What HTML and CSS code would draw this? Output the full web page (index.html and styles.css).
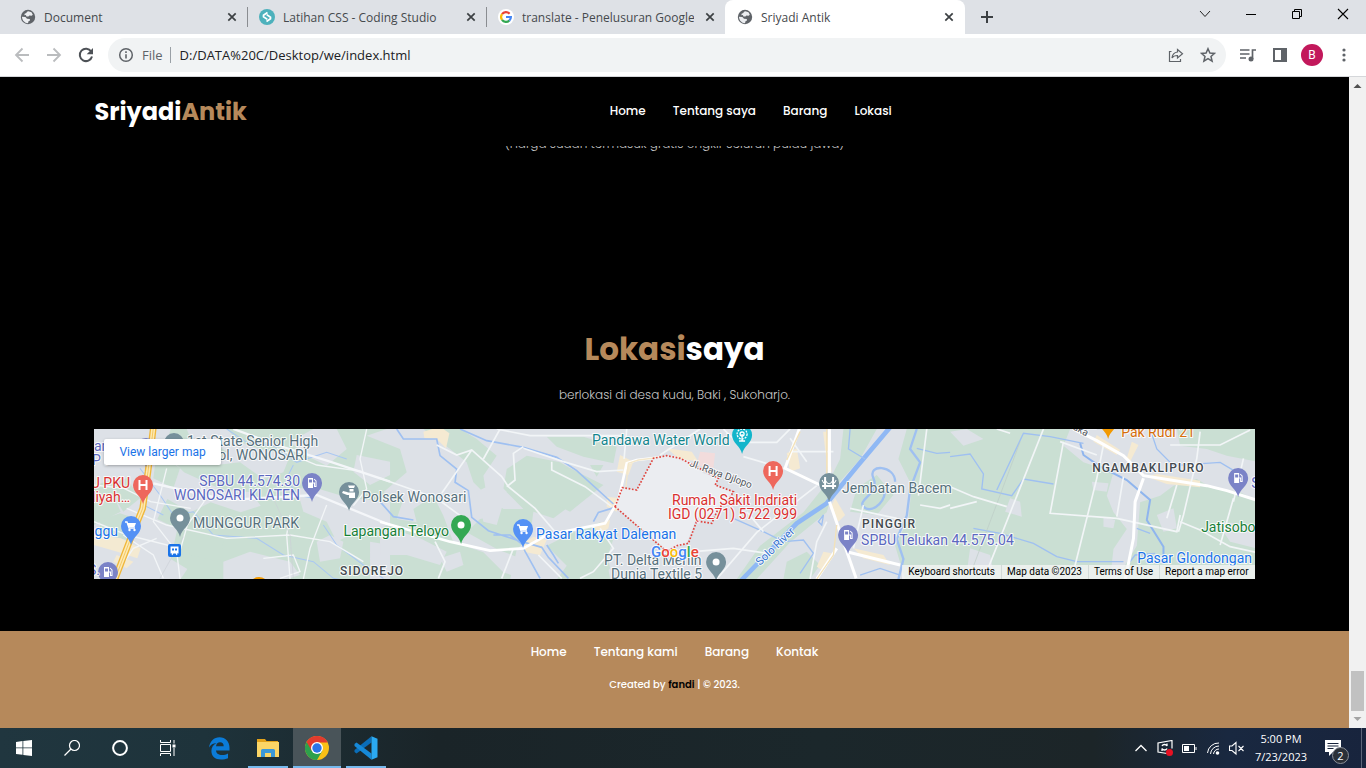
FILE: index.html
```html
<!DOCTYPE html>
<html lang="id">
<head>
<meta charset="utf-8">
<title>Sriyadi Antik</title>
<link rel="stylesheet" href="styles.css">
</head>
<body>
<svg class="defs" aria-hidden="true">
  <symbol id="globe" viewBox="0 0 16 16"><circle cx="8" cy="8" r="7.200" fill="#5f6368"/><path d="M8.400 2.200 11.500 3.300l1.300 2.500-1.200.9-2.200-.3-1 1.200-2-.1-.5-1.400-1.500.1.200-1.500 1.700-.6.700-1.400zM1.900 7.700l3.500.4 1.600 1.600 2.800.3.200 1.400-1.500.8-.5 2C4.500 14 2.300 11.500 1.900 7.700z" fill="#eceef1"/></symbol>
  <symbol id="x" viewBox="0 0 16 16"><path d="m4.300 4.300 7.400 7.400m0-7.400-7.400 7.400" stroke="#3c4043" stroke-width="1.700"/></symbol>
  <symbol id="pin" viewBox="-11 -11 22 31"><path d="M0 19C-1.500 11-10 8-10 0a10 10 0 1 1 20 0C10 8 1.500 11 0 19Z"/></symbol>
</svg>

<header class="tabs">
  <div class="tab"><svg class="i16"><use href="#globe"/></svg><span class="tab-title">Document</span><button class="tab-close" aria-label="Close Document"><svg class="i16"><use href="#x"/></svg></button></div>
  <div class="tab"><svg class="i16" viewBox="0 0 16 16"><circle cx="8" cy="8" r="8" fill="#4db1bc"/><path d="M8.500 3.500 4.500 6.300v1.400l3.800 2.700M7.700 5.600l3.800 2.700v1.400l-4 2.800" fill="none" stroke="#fff" stroke-width="1.700"/></svg><span class="tab-title">Latihan CSS - Coding Studio</span><button class="tab-close" aria-label="Close Latihan CSS"><svg class="i16"><use href="#x"/></svg></button></div>
  <div class="tab"><svg class="i16" viewBox="0 0 16 16"><circle cx="8" cy="8" r="8" fill="#fff"/><g fill="none" stroke-width="2.200"><path d="M4 5.200A4.900 4.900 0 0 1 11.600 4.700" stroke="#ea4335"/><path d="M4 10.800A4.900 4.900 0 0 1 4 5.200" stroke="#fbbc05"/><path d="M4 10.800a4.900 4.900 0 0 0 7.400.7" stroke="#34a853"/><path d="M8 8h4.900a4.900 4.900 0 0 1-1.600 3.600" stroke="#4285f4"/></g></svg><span class="tab-title">translate - Penelusuran Google</span><button class="tab-close" aria-label="Close translate"><svg class="i16"><use href="#x"/></svg></button></div>
  <div class="tab active"><svg class="i16"><use href="#globe"/></svg><span class="tab-title">Sriyadi Antik</span><button class="tab-close" aria-label="Close Sriyadi Antik"><svg class="i16"><use href="#x"/></svg></button></div>
  <button class="new-tab" aria-label="New tab"><svg class="i16" viewBox="0 0 16 16"><path d="M8 2v12M2 8h12" stroke="#3c4043" stroke-width="2"/></svg></button>
  <div class="win">
    <button aria-label="Search tabs"><svg class="i16" viewBox="0 0 16 16"><path d="m3 5 5 5.500L13 5" fill="none" stroke="#222"/></svg></button>
    <button aria-label="Minimize"><svg class="i16" viewBox="0 0 16 16"><path d="M3 8.500h10" stroke="#000"/></svg></button>
    <button aria-label="Restore"><svg class="i16" viewBox="0 0 16 16"><path d="M3.500 5.500h7v7h-7zM5.500 5.500v-2h7v7h-2" fill="none" stroke="#000"/></svg></button>
    <button aria-label="Close"><svg class="i16" viewBox="0 0 16 16"><path d="m3 3 10 10M13 3 3 13" stroke="#000" stroke-width="1.100"/></svg></button>
  </div>
</header>

<div class="toolbar">
  <button class="tool" aria-label="Back"><svg class="i16" viewBox="0 0 16 16"><path d="M15 8H2m6.500-6.500L2 8l6.500 6.500" fill="none" stroke="#babcbe" stroke-width="1.800"/></svg></button>
  <button class="tool" aria-label="Forward"><svg class="i16" viewBox="0 0 16 16"><path d="M1 8h13M7.500 1.500 14 8l-6.500 6.500" fill="none" stroke="#babcbe" stroke-width="1.800"/></svg></button>
  <button class="tool" aria-label="Reload"><svg class="i16" viewBox="0 0 16 16"><path d="M13.200 4.500A6.200 6.200 0 1 0 14 9.500" fill="none" stroke="#4d5156" stroke-width="2"/><path d="M15 1v6.300H8.700z" fill="#4d5156"/></svg></button>
  <div class="omnibox">
    <svg class="i16" viewBox="0 0 16 16"><circle cx="8" cy="8" r="6.300" fill="none" stroke="#5f6368" stroke-width="1.500"/><path d="M8 7.200v4.200M8 4.300v1.600" stroke="#5f6368" stroke-width="1.600"/></svg>
    <label class="scheme" for="url">File</label>
    <input id="url" type="text" value="D:/DATA%20C/Desktop/we/index.html">
    <button class="tool" aria-label="Share"><svg class="i16" viewBox="0 0 16 16"><path d="M3.500 4.500h-2v10h11v-2.500M9.500 2.500l5 4.300-5 4.200V8.500c-2.800 0-4.500.8-5.500 2.500.3-3.500 2.300-5.600 5.500-6z" fill="none" stroke="#5f6368" stroke-width="1.200"/></svg></button>
    <button class="tool" aria-label="Bookmark"><svg class="i16" viewBox="0 0 16 16"><path d="m8 1.700 1.900 4.300 4.600.4-3.500 3.100 1.100 4.700L8 11.700l-4.100 2.500L5 9.500 1.500 6.400 6.100 6z" fill="none" stroke="#5f6368" stroke-width="1.500"/></svg></button>
  </div>
  <button class="tool" aria-label="Media"><svg class="i16" viewBox="0 0 16 16"><path d="M0 3h9.500M0 7h9.500M0 11h6M12.500 12V3H16" fill="none" stroke="#5f6368" stroke-width="1.700"/><circle cx="11" cy="12" r="2.500" fill="#5f6368"/></svg></button>
  <button class="tool" aria-label="Side panel"><svg class="i16" viewBox="0 0 16 16"><path d="M1 1h14v14H1zM3 3v10h6V3z" fill="#5f6368" fill-rule="evenodd"/></svg></button>
  <button class="tool" aria-label="Profile"><span class="avatar">B</span></button>
  <button class="tool" aria-label="Menu"><svg class="i16" viewBox="0 0 16 16" fill="#5f6368"><circle cx="8" cy="3" r="1.600"/><circle cx="8" cy="8" r="1.600"/><circle cx="8" cy="13" r="1.600"/></svg></button>
</div>

<div class="viewport">
  <div class="page">
    <div class="navbar">
      <a class="logo" href="#">Sriyadi<span>Antik</span></a>
      <nav class="links"><a href="#home">Home</a><a href="#tentang">Tentang saya</a><a href="#barang">Barang</a><a href="#lokasi">Lokasi</a></nav>
      <div class="navbar-extra"></div>
    </div>
    <main>
      <div class="clip"><p>(Harga sudah termasuk gratis ongkir seluruh pulau jawa)</p></div>
      <section class="lokasi" id="lokasi">
        <h2><span>Lokasi</span>saya</h2>
        <p>berlokasi di desa kudu, Baki , Sukoharjo.</p>
        <div class="map">
          <svg class="map-art" viewBox="0 0 1160 150" preserveAspectRatio="xMidYMid slice">
            <rect width="1160" height="150" fill="#cadfd3"/>
            <g transform="translate(-4 -4) scale(.33333)">
              <g fill="#dde1e7">
                <path d="M12 12h230l-20 70 60 60 110 50 90 10 30 40-60 20-90-30-60 30-70-40-30 60 60 30-20 90 50 30-40 60-60 40H12V300l80-40-40-90-40 10z"/>
                <path d="M290 12h120l40 40 60 20 90 20-20 50-60 20-70-50-90 10-50-60zM620 190l60 0 100 30 120 10v70l-100 20-60 30-30-60-70-30zM600 50l70-38h70l30 60-60 50-60-30zM400 410l80-30 120 30 30 40-40 12H400zM680 350l40-20 40 20-10 50-60 10zM800 90l100 20v40l-60 30-50-40zM840 350l60 10v102h-60z"/>
              </g>
              <g fill="#cadfd3"><path d="M50 180l60-20 40 60-50 40zM30 285l60-20 60 20-40 60-80-20zM280 300l80-10 40 60-10 60-90-20zM200 80l70 50-20 60-60-30zM290 60l60-20 60 40-40 50-60-10z"/></g>
              <g fill="#f4ead2"><path d="M12 330l80 10 60 30-10 30-60-20-70-20zM80 390l50 20-20 20-40-20z"/></g>
              <g fill="none" stroke="#a9c7f3" stroke-width="3"><path d="M410 12l60 40 80 10 70 50 90-30 60 20M150 130l60 80 40 60 60-10 60 70 130 10 80 50 90 20 60 50 110 20M610 120l-20 40 30 50 50 10M700 300l40 60 80 60 60 40M220 270l-60-30-20-60"/></g>
              <g fill="none" stroke="#f2f5f7" stroke-width="4"><path d="M12 290l100 40 160 40 20-70 50-70-10-60M110 250l120 50 180 40 190-10 120 20 100 60M230 130l-40 160 70 90 10 82M200 340l-70 30-60 90M100 330l90 60 30 70M600 270l-10 60 10 132M710 240l-50 130-20 92M560 70l120 50 140 20M830 12l-20 90 20 90-40 50M12 180l90 10 80 40 120 20M520 400l90-10 20 50-60 20"/></g>
              <path d="M190 175l220 50 270-15L900 300M430 12l130 48 160 50 180 60" fill="none" stroke="#f4f6f9" stroke-width="7"/>
              <path d="M280 335l-70 125M550 220l50 110 10 130" fill="none" stroke="#cbd0d6" stroke-width="2"/>
              <path d="M190 8 174 140 158 250 122 340 72 470" fill="none" stroke="#f0b73a" stroke-width="20"/>
              <path d="M190 8 174 140 158 250 122 340 72 470" fill="none" stroke="#fdeab4" stroke-width="12"/>
              <path d="M190 8 174 140 158 250 122 340 72 470" fill="none" stroke="#f0b73a" stroke-width="2"/>
            </g>
            <g transform="translate(286 -4) scale(.33333)">
              <g fill="#dde1e7">
                <path d="M20 12h110l80 60 50 40 20 60 60 60 10 40-50 10-40 40 90 50 100 40-20 50-60-20-60-60-90-30-30-80-30-60-60 40 10 40-60-10 20-60-60-20 70-60-20-70-100-40z"/>
                <path d="M290 200l60-30 30 30-30 100-40-10zM240 12h480v90l-30 20 10 70-60-20-100-60-100-20-60 40-10 60 60 60-60 0-50-40-10-60 40-60-60-50z"/>
                <path d="M460 260l60 20 80-60 60-60 180 20v282H690l-10-60 20-60-40-50-80 30-80 40 60 60-30 42H390l20-90 40-40zM0 300l120 40 80 40-20 40-100-30-80 0zM180 400l60-20 10 40-50 20z"/>
                <path d="M650 12h200v200H680z"/>
              </g>
              <g fill="#cadfd3"><path d="M500 140l70-10 100 50-50 40-50 40-60-30zM500 35l110 0 100 30-10 50-90-20-80-30zM640 390l30-50 20 90-30 32h-30zM630 120l40 0-20 35z"/></g>
              <g fill="#f5ead2"><path d="M130 20l50-15 28 20-10 45-25-25-40-5zM720 90l40 20-15 40-35-10zM680 215l40 5-10 40-30-15zM430 355l30-20 40 10-20 45-50-10zM640 300l50-15-5 25-30 20z"/></g>
              <g fill="none" stroke="#9fc0f1" stroke-width="5"><path d="M50 12l20 30 100 0 10 50 50 40-5 40 40 25 10 80 50 40 90 30 70 20 20 30 60 63M430 370l50 90M240 12l80 35 110 20 100 30 60 40 110 100M640 290l15-28 50-15M500 360l20 30 15 25M340 330l50 0 40 30M0 230l40 45 60 10"/></g>
              <g fill="none" stroke="#f2f5f7" stroke-width="5"><path d="M0 160l170 60 95 70M170 60l60 30 45-15 90 80 20 30 80 65 60 70M275 75l-90 130M310 102l50-90M430 65l-30 20 5 80-25 20M350 12l100 20 280 0M430 70l120 40 100 30 80-5M515 110v25l100 50 80 60M660 310l40 60-60 70-40 20M400 370l-35 90M475 390l70 70M165 350l30 60-20 50M740 12l-8 90"/></g>
              <path d="M0 290l210 60 120 27 100-7 70-40 100-20 75-15 40-70 25-110 30-10 130-15" fill="none" stroke="#fff" stroke-width="8"/>
              <path d="M735 210l10-95 30-10 120-15" fill="none" stroke="#f3e7cb" stroke-width="4"/>
            </g>
            <g transform="translate(566 -4) scale(.33333)">
              <path d="M0 12h900v450H0z" fill="#dde1e7"/>
              <path d="M20 92l50 0 60 53 45 15-10 20 55 20-50 65-60 13-30 77-60 20-155-130 22-57 43 7 50-95z" fill="#ebedf1"/>
              <path d="M550 12h100l-50 90-80 90-20 70-110 90-100 110h-60l70-100 130-100 80-100 30-60zM740 12h160v450H735l-30-100 40-80 10-100-40-80zM590 190l60-40 50 60-50 60-80-10zM380 410l60-30 40 40-30 42h-80z" fill="#cadfd3"/>
              <g fill="#f5ead2"><path d="M380 85l30-15 10 60-30 10zM500 20l15 120-12 0-14-120zM525 220l30 50-20 20-25-40zM490 380l25 5-30 50-15-10zM20 70l75 10 20 30-60-10zM580 370l90 20 20 30-80-20z"/></g>
              <path d="M120 80l45 5-5 45-50-10z" fill="#f2dcdc"/>
              <path d="M700-5 590 125 500 235 410 295 230 480" fill="none" stroke="#8fb8f4" stroke-width="14"/>
              <g fill="none" stroke="#9fc0f1" stroke-width="7"><path d="M770 12l-20 60 30 40-30 80-10 80-30 70 20 60-15 60M705 170c0-50-85-55-65-10s-50 65-30 85 60-5 65-45"/><path d="M220 280l90 40 60 30 60-5 30 40-40 60M570 12l-5 60 50 30M770 70l60 15 70-5M600 450l60-20 60 20M475 290l15-20-5 30z" stroke-width="4"/></g>
              <g fill="none" stroke="#f2f5f7" stroke-width="5"><path d="M0 90l120-78M190 12l40 40 120 0 40-40M250 95l120 35M100 380l120-10 100 15M170 462l120-140 180-140M310 320l-50-60M440 110l-50-70M570 250l140 30M500 290l-30 60-20 112M610 240l-30 130M390 80l130 0M780 240l60 10 60-20M800 12l-25 200"/></g>
              <path d="M420 5l-45 125 105 50M508 12v160M508 230l80 230M530 370l-60 92M560 380l160 40" fill="none" stroke="#fff" stroke-width="9"/>
              <path d="M530 300l-10 90-50 72M500 12v135M420 20l-40 85" fill="none" stroke="#f3e2b9" stroke-width="4"/>
              <path d="M-135 245-113 188-70 195-20 100 20 92 60 100 175 160 165 180 220 200 205 225 175 250 155 295 110 288 85 355 50 362 20 380z" fill="none" stroke="#e0443e" stroke-width="5" stroke-dasharray="5 5"/>
            </g>
            <g transform="translate(856 -4) scale(.33333)">
              <path d="M0 12h930v450H0z" fill="#cadfd3"/>
              <g fill="#dde1e7"><path d="M360 12h320l10 50 80 10 60 20 100 20v120l-60-30-80-10-50-30-70 20-40 30-60 20-10 130-60 100-20 0 10-90 40-60-40-50-20-50 20-70-90-30-60-50zM180 220l30 10 5 45-50-15zM0 20l50-8 50 30-60 20zM425 170l50 5-5 25-40-5zM460 275l35 10-5 25-30-5zM620 270l50-20 10 60-40 10zM60 370l60 20 10 52H50zM800 290l120 10v70l-80-20z"/></g>
              <g fill="#f5ead2"><path d="M440 30l70 45-10 15-70-40zM545 50l20 10-25 50-10-10zM590 155l30-8 130 20 0 20-100-10z"/></g>
              <g fill="none" stroke="#9fc0f1" stroke-width="4"><path d="M0 95l60-8 40 60-5 45 90 20 35-50 90 15M140 195l80-170 80 10 100 20M70 310l80 15 100 30 70 40 60 15 140 0M600 12l20 60 50 50 140-10 50 30M540 410l15-20 60-5M560 310l40 15"/></g>
              <path d="M390 55l10 35 50 35 80 40 70 60-10 60 50 80v45" fill="none" stroke="#8fb5ee" stroke-width="6"/>
              <path d="M210 50L60 450" fill="none" stroke="#bccbc6" stroke-width="2"/>
              <g fill="none" stroke="#f2f5f7" stroke-width="5"><path d="M280 12L110 440M340 50L300 265l200 15 180 40 10-50M460 60l-20 100-70 280M520 155l-20 120M0 185l70 30 100 30M0 250l80-20M330 50l110 40M750 20l-10 80-40 170-15 50M680 180l-30 100M850 220l-40 140M690 290l60 25 90 50 90 20M440 12l-30 0M660 60l150 0 90-45M880 100l-30 130M180 25l-40-13"/></g>
              <path d="M370 12l70 35 80 45 60 60 190 30 60 15 110 35M580 160l-25 70-5 110-25 125" fill="none" stroke="#fff" stroke-width="9"/>
            </g>
            <g class="pins">
              <use href="#pin" x="41" y="8" width="22" height="31" fill="#7b83c7"/>
              <use href="#pin" x="69" y="3" width="22" height="31" fill="#76909b"/>
              <use href="#pin" x="207" y="43" width="22" height="31" fill="#7b83c7"/>
              <use href="#pin" x="244" y="52" width="22" height="31" fill="#76909b"/>
              <use href="#pin" x="38" y="45" width="22" height="31" fill="#ee675c"/>
              <use href="#pin" x="26" y="86" width="22" height="31" fill="#5491f5"/>
              <use href="#pin" x="75" y="78" width="22" height="31" fill="#76909b"/>
              <use href="#pin" x="3" y="132" width="22" height="31" fill="#7b83c7"/>
              <use href="#pin" x="154" y="147" width="22" height="31" fill="#f29900"/>
              <use href="#pin" x="356" y="85" width="22" height="31" fill="#34a853"/>
              <use href="#pin" x="418" y="89" width="22" height="31" fill="#5491f5"/>
              <use href="#pin" x="637" y="-5" width="22" height="31" fill="#12b5cb"/>
              <use href="#pin" x="668" y="31" width="22" height="31" fill="#ee675c"/>
              <use href="#pin" x="724" y="43" width="22" height="31" fill="#76909b"/>
              <use href="#pin" x="743" y="95" width="22" height="31" fill="#7b83c7"/>
              <use href="#pin" x="611" y="122" width="22" height="31" fill="#76909b"/>
              <use href="#pin" x="1003" y="-20" width="22" height="31" fill="#f29900"/>
              <use href="#pin" x="1133" y="38" width="22" height="31" fill="#7b83c7"/>
            </g>
            <defs>
              <g id="gas"><path d="M-4-5h5v10h-5z" fill="#fff"/><path d="M-3-3.500h3v3h-3z" fill="#7b83c7"/><path d="M1 0h1.500v3.500H4V-2L2-4" fill="none" stroke="#fff"/></g>
              <g id="cart"><path d="M-6-4h2l2 6h6" fill="none" stroke="#fff" stroke-width="1.300"/><path d="M-4-3h9L3.500 1H-2.500z" fill="#fff"/><circle cx="-1.500" cy="4" r="1.200" fill="#fff"/><circle cx="3.500" cy="4" r="1.200" fill="#fff"/></g>
              <g id="hosp"><path d="M-3.500-5v10M3.500-5v10M-3.500 0h7" stroke="#fff" stroke-width="2" fill="none"/></g>
            </defs>
            <use href="#gas" x="218" y="54"/><use href="#gas" x="14" y="143"/><use href="#gas" x="754" y="106"/><use href="#gas" x="1144" y="49"/>
            <use href="#cart" x="37" y="97"/><use href="#cart" x="429" y="100"/>
            <use href="#hosp" x="49" y="56"/><use href="#hosp" x="679" y="42"/>
            <g fill="#fff"><circle cx="86" cy="89" r="3.500"/><circle cx="367" cy="96" r="3.500"/><circle cx="622" cy="133" r="3.500"/>
              <path d="M254 56.500h7l-1 2.500h-5zM255.500 60h4v2.500h-4zM254 63.500h7v5.500h-6v-3h-2l-5-2 1-2 4 1z"/>
              <path d="M730 48h2v12h-2zM738 48h2v12h-2zM728 56h14v2h-14z"/></g>
            <path d="M728 51c2 4 2 4 3 0 3 5 5 5 8 0 1 4 1 4 3 0" fill="none" stroke="#fff"/>
            <g fill="none" stroke="#fff" stroke-width="1.300"><circle cx="648" cy="5" r="5" stroke-dasharray="2 1"/><circle cx="648" cy="5" r="2"/><path d="M648 5v7M645 12h6"/></g>
            <rect x="74" y="115" width="13" height="13" rx="2" fill="#1a73e8"/><path d="M77 118h7v6h-7zM78 126l1-2m4 2-1-2" fill="#fff" stroke="#fff"/><path d="M78 119.500h2v2h-2zM81 119.500h2v2h-2z" fill="#1a73e8"/>
            <g class="labels">
              <g class="slate"><text x="93" y="17">1st State Senior High</text><text x="93" y="31">School, WONOSARI</text><text x="99" y="99">MUNGGUR PARK</text><text x="268" y="73">Polsek Wonosari</text><text x="748" y="64">Jembatan Bacem</text><text x="510" y="136">PT. Delta Merlin</text><text x="517" y="150">Dunia Textile 5</text></g>
              <g class="violet"><text x="0" y="22">an</text><text x="-2" y="36">P P</text><text class="end" x="206" y="57">SPBU 44.574.30</text><text class="end" x="206" y="71">WONOSARI KLATEN</text><text x="767" y="116">SPBU Telukan 44.575.04</text><text x="-6" y="146">S.</text><text x="1157" y="59">S</text></g>
              <g class="red"><text class="end" x="36" y="59">RSU PKU</text><text class="end" x="36" y="73">Aisliyah…</text><text class="end" x="703" y="76">Rumah Sakit Indriati</text><text class="end" x="703" y="90">IGD (0271) 5722 999</text></g>
              <g class="blue"><text class="end" x="24" y="107">Munggu</text><text x="442" y="110">Pasar Rakyat Daleman</text><text x="1043" y="134">Pasar Glondongan</text></g>
              <g class="green"><text class="end" x="355" y="107">Lapangan Teloyo</text><text x="1107" y="103">Jatisobo</text></g>
              <text class="teal" x="498" y="16">Pandawa Water World</text>
              <text class="orange" x="1027" y="8">Pak Rudi 21</text>
              <g class="area"><text x="246" y="146">SIDOREJO</text><text x="768" y="99">PINGGIR</text><text x="998" y="43">NGAMBAKLIPURO</text></g>
              <g class="road"><text transform="translate(595 37) rotate(20)">Jl. Raya Djlopo</text><text transform="translate(978 0) rotate(28)">uka</text></g>
              <text class="river" transform="translate(666 137) rotate(-44)">Solo River</text>
              <text class="gmark" x="557" y="128"><tspan fill="#4285f4">G</tspan><tspan fill="#ea4335">o</tspan><tspan fill="#fbbc05">o</tspan><tspan fill="#4285f4">g</tspan><tspan fill="#34a853">l</tspan><tspan fill="#ea4335">e</tspan></text>
            </g>
          </svg>
          <a class="larger" href="#map">View larger map</a>
          <div class="credits"><button>Keyboard shortcuts</button><span>Map data ©2023</span><a href="#terms">Terms of Use</a><a href="#report">Report a map error</a></div>
        </div>
      </section>
    </main>
    <footer>
      <nav class="links"><a href="#home">Home</a><a href="#tentang">Tentang kami</a><a href="#barang">Barang</a><a href="#kontak">Kontak</a></nav>
      <p>Created by <a href="#fandi">fandi</a> | © 2023.</p>
    </footer>
  </div>
  <div class="scrollbar">
    <svg viewBox="0 0 17 17"><path d="m4.500 11 4-4 4 4z" fill="#505050"/></svg>
    <div class="track"><div class="thumb"></div></div>
    <svg viewBox="0 0 17 17"><path d="m4.500 6 4 4 4-4z" fill="#a3a3a3"/></svg>
  </div>
</div>

<div class="taskbar">
  <div class="group">
    <button aria-label="Start"><svg class="i16" viewBox="0 0 16 16" fill="#fff"><path d="m0 2 6.500-.9v6.400H0zM7.300 1 16 0v7.500H7.300zM0 8.300h6.500v6.500L0 14zM7.300 8.300H16V16l-8.700-1.100z"/></svg></button>
    <button aria-label="Search"><svg class="i16" viewBox="0 0 16 16"><circle cx="10.500" cy="5.500" r="5" fill="none" stroke="#fff" stroke-width="1.200"/><path d="M7 9 .5 15.500" stroke="#fff" stroke-width="1.300"/></svg></button>
    <button aria-label="Cortana"><svg class="i16" viewBox="0 0 16 16"><circle cx="8" cy="8" r="6.900" fill="none" stroke="#fff" stroke-width="2"/></svg></button>
    <button aria-label="Task view"><svg class="i16" viewBox="0 0 16 16"><path d="M.5 0v2.500h10V0M.5 4.500h10v7H.5zM.5 16v-2.500h10V16M14 0v3.500M14 8v8" fill="none" stroke="#fff"/><path d="M12.500 4.500h3v3h-3z" fill="#fff"/></svg></button>
  </div>
  <div class="group apps">
    <button aria-label="Edge"><svg class="i24" viewBox="0 0 24 24"><path d="M2 11.500C3 5 7 1.200 12.500 1.200c6 0 10 4.300 10 10.500v2.800H9c.2 3 2.700 4.500 6 4.500 2.400 0 4.200-.5 6-1.500v4.700c-2 .9-4.300 1.300-7 1.300-6 0-9.600-3.400-9.600-8.500 0-3.500 1.800-6.400 5.100-8C6 7.300 3.500 8.700 2 11.500zm7-1.200h7.700c0-2.500-1.300-4-3.700-4-2.200 0-3.600 1.500-4 4z" fill="#0b7bd8"/></svg></button>
    <button class="run" aria-label="File Explorer"><svg class="i24" viewBox="0 0 24 24"><path d="M1 3h8l1.500 2H22v16H1z" fill="#e3a21a"/><path d="M1 6h22v15H1z" fill="#fbd566"/><path d="M5 21v-6.500q0-1.500 1.500-1.500h11q1.500 0 1.500 1.500V21h-4v-4h-6v4z" fill="#3b98d8"/></svg></button>
    <button class="run current" aria-label="Chrome"><svg class="i24" viewBox="0 0 24 24"><circle cx="12" cy="12" r="12" fill="#fbc116"/><path d="M12 12 1.600 6A12 12 0 0 0 12 24l5.200-9z" fill="#2da04c"/><path d="M12 12V6.500h10.700A12 12 0 0 0 1.600 6l5.200 9z" fill="#e23b2e"/><circle cx="12" cy="12" r="6" fill="#fff"/><circle cx="12" cy="12" r="4.700" fill="#2b75e8"/></svg></button>
    <button class="run" aria-label="Visual Studio Code"><svg class="i24" viewBox="0 0 24 24"><path d="m17.500 6.500-15 11L.5 16v-2L17.500.2z" fill="#0a6db8"/><path d="M.5 8 2.500 6.500l15 11v6.300L.5 10z" fill="#1689d8"/><path d="m17.500.2 6 2.500v18.600l-6 2.500z" fill="#2baaf2"/></svg></button>
  </div>
  <div class="tray">
    <button aria-label="Hidden icons"><svg class="i16" viewBox="0 0 16 16"><path d="m2.500 11 5.500-5.500 5.500 5.500" fill="none" stroke="#fff" stroke-width="1.300"/></svg></button>
    <button aria-label="Update"><svg class="i16" viewBox="0 0 16 16"><path d="M10 13.500 1 12V3l14-2.500v8" fill="none" stroke="#fff" stroke-width="1.200"/><path d="M5 6c1-2 4-2 5 0V3.500M10 8.500c-1 2-4 2-5 0V11" fill="none" stroke="#fff" stroke-width="1.300"/><circle cx="12.500" cy="12.500" r="3.500" fill="#e81123"/></svg></button>
    <button aria-label="Battery"><svg class="i16" viewBox="0 0 16 16"><path d="M1.500 4.500h12v8h-12zM15 7v3" fill="none" stroke="#fff"/><path d="M3 6h5v5H3z" fill="#fff"/></svg></button>
    <button aria-label="Network"><svg class="i16" viewBox="0 0 16 16"><g fill="none" stroke="#fff"><path d="M2.500 13A11 11 0 0 1 14 3M5.500 14A8.500 8.500 0 0 1 14 6M8.500 14A5.500 5.500 0 0 1 14 9"/></g><circle cx="12.500" cy="13" r="1.800" fill="#fff"/></svg></button>
    <button aria-label="Volume"><svg class="i16" viewBox="0 0 16 16"><path d="M.5 6v4.500H3l4 3.500V2.500L3 6zM9.500 6l5 5m0-5-5 5" fill="none" stroke="#fff" stroke-width="1.100"/></svg></button>
    <div class="clock"><time>5:00 PM</time><time>7/23/2023</time></div>
    <button class="notif" aria-label="Notifications"><svg class="i16" viewBox="0 0 16 16"><path d="M0 0h16v12H8l-4 4v-4H0z" fill="#fff"/><path d="M2.500 3.500h11M2.500 6h11M2.500 8.500h6" stroke="#17233b"/></svg><span class="count">2</span></button>
    <div class="peek"></div>
  </div>
</div>
</body>
</html>
```
FILE: styles.css
```css
* { box-sizing: border-box; margin: 0; padding: 0; }
body { min-height: 100vh; display: flex; flex-direction: column; font-family: "Open Sans", sans-serif; font-size: 12px; background: #000; }
button { background: none; border: 0; font: inherit; color: inherit; display: flex; align-items: center; justify-content: center; }
a { color: inherit; text-decoration: none; }
svg { display: block; flex: none; }
.defs { position: absolute; width: 0; height: 0; }
.i16 { width: 16px; height: 16px; }
.i24 { width: 24px; height: 24px; }

/* Tab strip */
.tabs { height: 34px; display: flex; padding-left: 8px; background: #dee1e6; color: #45494d; }
.tab { width: 239px; display: flex; align-items: center; gap: 8px; padding: 0 7px 0 12px; }
.tab:nth-child(2), .tab:nth-child(3) { background: linear-gradient(#8a8d91, #8a8d91) 0 50% / 1px 20px no-repeat; }
.tab.active { width: 240px; padding-right: 8px; background: #fff; border-radius: 8px 8px 0 0; }
.tab-title { flex: 1; white-space: nowrap; overflow: hidden; }
.new-tab { width: 44px; }
.win { margin-left: auto; display: flex; }
.win button { width: 46px; height: 28px; }

/* Toolbar */
.toolbar { height: 43px; display: flex; align-items: center; padding: 0 6px; background: #fff; border-bottom: 1px solid #d5d7da; }
.tool { width: 32px; height: 32px; flex: none; }
.omnibox { flex: 1; height: 34px; display: flex; align-items: center; margin: 0 6px; padding: 0 2px 0 10px; border-radius: 17px; background: #f1f3f4; font-size: 13px; }
.scheme { margin-left: 8px; padding-right: 7px; border-right: 1px solid #9aa0a6; line-height: 16px; color: #5f6368; }
.omnibox input { flex: 1; min-width: 0; margin-left: 9px; border: 0; background: none; font: inherit; color: #202124; outline: 0; }
.avatar { width: 22px; height: 22px; border-radius: 50%; background: #c2185b; color: #fff; line-height: 22px; text-align: center; font-family: Roboto, sans-serif; }

/* Web page */
.viewport { flex: 1; display: flex; }
.page { flex: 1; display: flex; flex-direction: column; background: #000; color: #fff; font-family: Poppins, Inter, sans-serif; }
.navbar { height: 69px; display: flex; align-items: center; justify-content: space-between; padding: 0 7%; }
.logo { font-size: 24px; font-weight: 700; }
.logo span, h2 span { color: #b6895b; }
.links { display: flex; gap: 27px; font-size: 12px; font-weight: 500; line-height: 18px; }
.navbar .links { padding-bottom: 2px; }
main { flex: 1; display: flex; flex-direction: column; text-align: center; }
main p { font-size: 12px; font-weight: 300; line-height: 20px; color: #c8c8c8; }
.clip { overflow: hidden; }
.clip p { margin-top: -12px; }
.lokasi { margin-top: auto; padding: 0 7% 52px; }
h2 { font-size: 31px; line-height: 40px; font-weight: 700; margin-bottom: 16px; }
.map { position: relative; height: 150px; margin-top: 24px; overflow: hidden; text-align: left; font-family: Roboto, sans-serif; }
.map-art { width: 100%; height: 100%; }
.labels { font-size: 14px; paint-order: stroke; stroke: #fff; stroke-opacity: .85; stroke-width: 2px; stroke-linejoin: round; }
.end { text-anchor: end; }
.slate { fill: #56707c; }
.violet { fill: #5c68c0; }
.red { fill: #d93030; }
.blue { fill: #1a73e8; }
.green { fill: #188038; }
.teal { fill: #12858d; }
.orange { fill: #d56e0c; }
.area { fill: #43494f; font-size: 12px; font-weight: 500; letter-spacing: 1px; }
.road { fill: #50565c; font-size: 10px; }
.river { fill: #3271cf; font-size: 11px; }
.gmark { font-size: 15px; font-weight: 500; }
.larger { position: absolute; left: 10px; top: 10px; padding: 0 15px; border-radius: 2px; background: #fff; box-shadow: 0 1px 3px rgba(0,0,0,.3); color: #1a73e8; font-size: 12px; line-height: 26px; }
.credits { position: absolute; right: 0; bottom: 0; display: flex; background: rgba(245,245,245,.75); color: #000; font-size: 10px; line-height: 14px; }
.credits > * { padding: 0 6px; }
.credits > * + * { border-left: 1px solid #d3dad8; padding-left: 5px; }
footer { height: 97px; display: flex; flex-direction: column; align-items: center; gap: 16px; padding-top: 12px; background: #b6895b; }
footer p { font-size: 10px; line-height: 16px; font-weight: 500; }
footer p a { color: #000; font-weight: 600; }

.scrollbar { width: 17px; display: flex; flex-direction: column; background: #f1f1f1; }
.scrollbar svg { width: 17px; height: 17px; }
.track { flex: 1; display: flex; flex-direction: column; justify-content: flex-end; padding: 0 2px; }
.thumb { height: 40px; background: #c1c1c1; }

/* Taskbar */
.taskbar { height: 40px; display: flex; color: #fff; background: linear-gradient(90deg, #20363f, #1e333b 15%, #1a2428 32%, #1b272b 60%, #1c2528 80%, #192840 90%, #18243d); }
.group { display: flex; }
.group button { width: 48px; height: 40px; }
.apps { gap: 1px; margin-left: 3px; }
.run { background: linear-gradient(#76b9ed, #76b9ed) 50% 100% / 40px 2px no-repeat; }
.group .current { background: linear-gradient(#76b9ed, #76b9ed) 0 100% / 100% 2px no-repeat #495459; }
.tray { margin-left: auto; display: flex; }
.tray button { width: 24px; height: 40px; }
.clock { width: 64px; display: flex; flex-direction: column; align-items: center; padding-top: 2px; font-size: 11px; line-height: 18px; }
.tray .notif { width: 40px; margin-right: 8px; position: relative; }
.count { position: absolute; left: 19px; top: 19px; width: 17px; height: 17px; border: 1px solid #8b9099; border-radius: 50%; background: #2b3038; font-size: 11px; line-height: 15px; }
.peek { width: 5px; border-left: 1px solid #5c6679; }
```
